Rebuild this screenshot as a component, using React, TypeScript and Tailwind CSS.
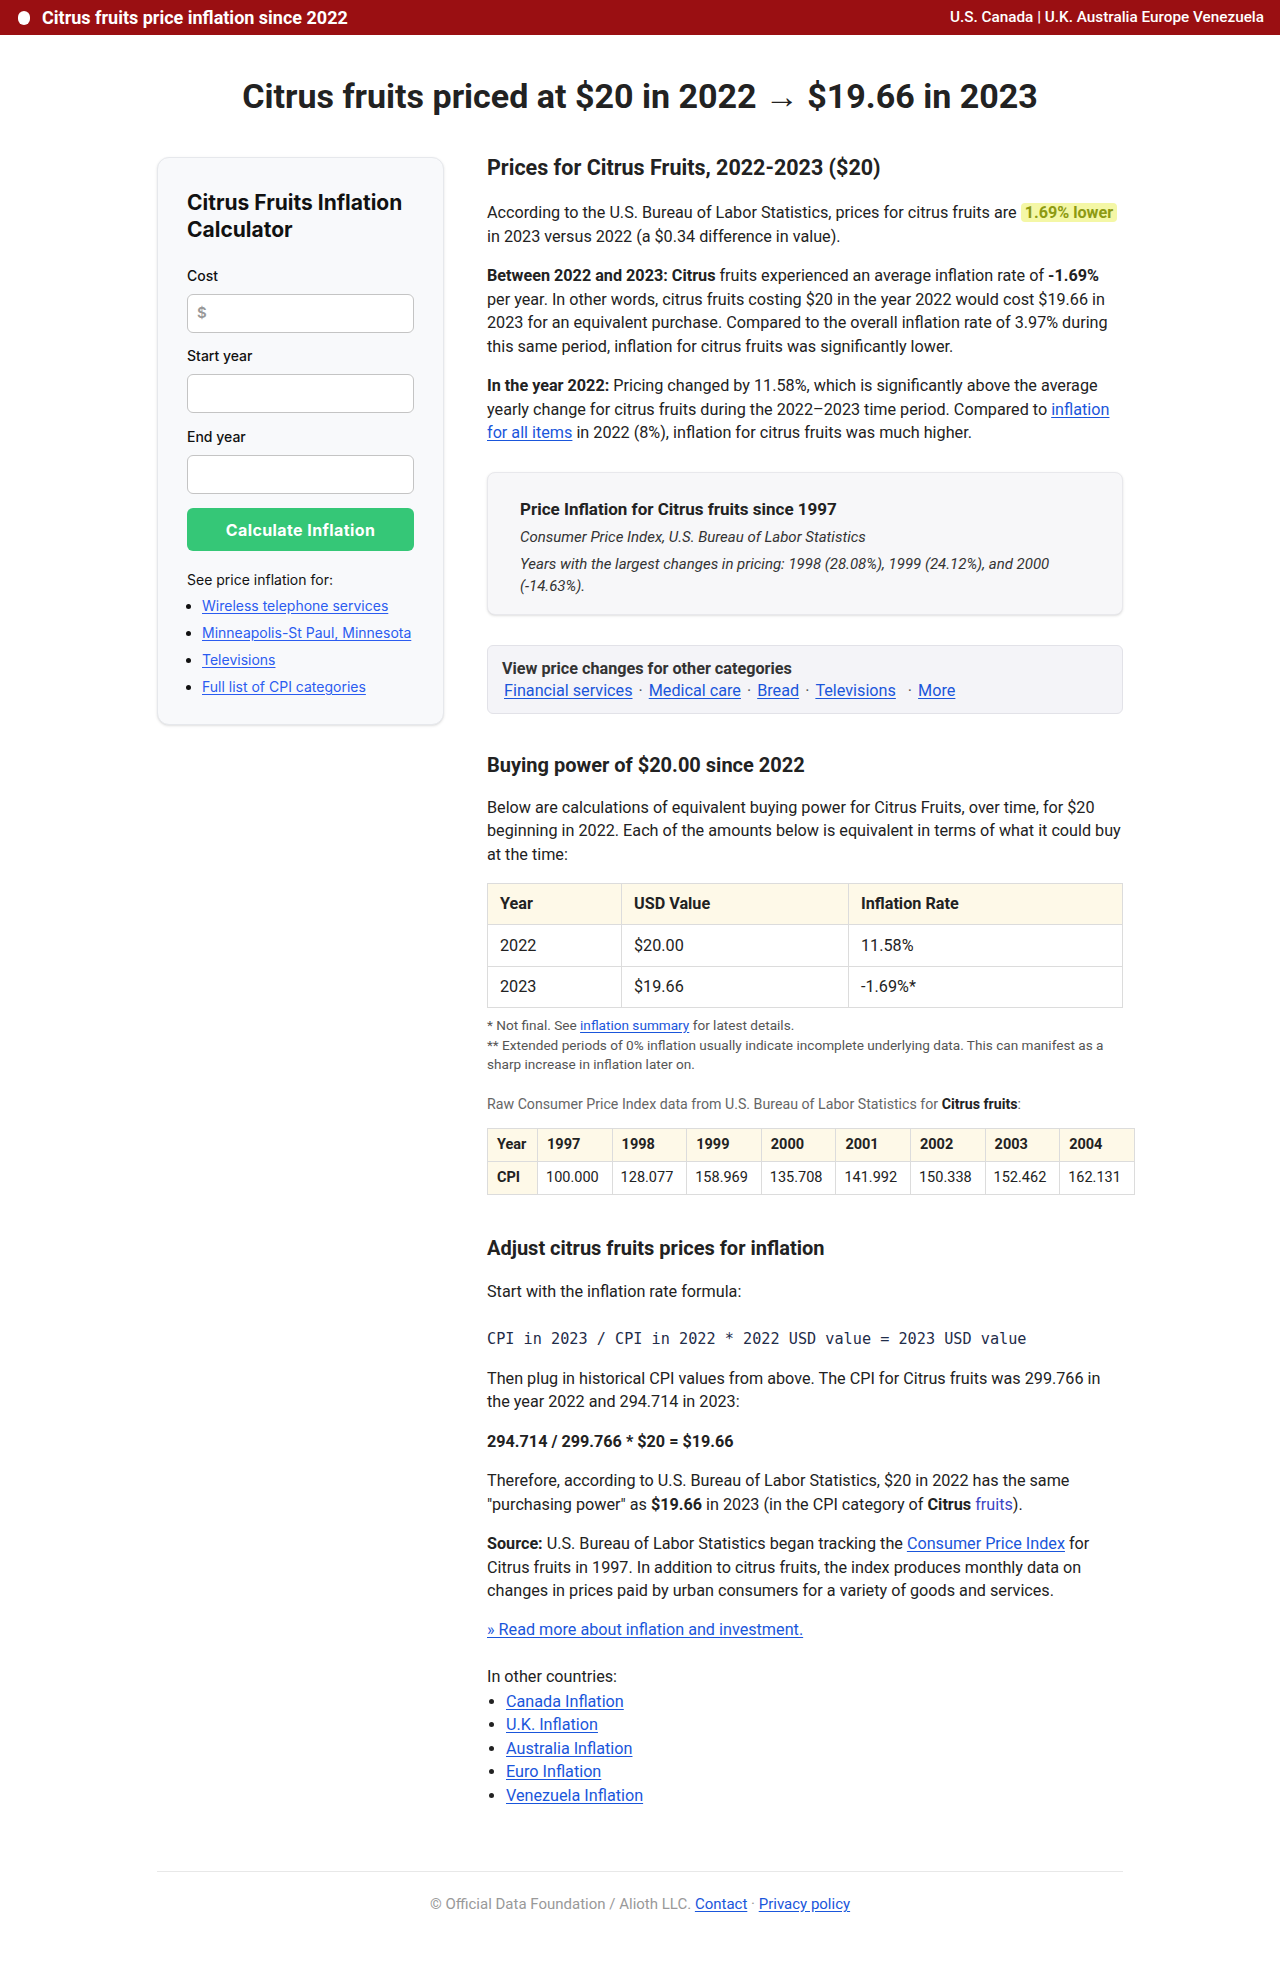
const sans = { fontFamily: "Roboto, 'Liberation Sans', sans-serif" };
const ui = { fontFamily: "Inter, 'Liberation Sans', sans-serif" };

const sideLinks = [
  "Wireless telephone services",
  "Minneapolis-St Paul, Minnesota",
  "Televisions",
  "Full list of CPI categories",
];

const cpi = [
  ["1997", "100.000"],
  ["1998", "128.077"],
  ["1999", "158.969"],
  ["2000", "135.708"],
  ["2001", "141.992"],
  ["2002", "150.338"],
  ["2003", "152.462"],
  ["2004", "162.131"],
];

const countries = [
  "Canada Inflation",
  "U.K. Inflation",
  "Australia Inflation",
  "Euro Inflation",
  "Venezuela Inflation",
];

const link = "text-[#1a56db] underline underline-offset-2";

function Sidebar() {
  return (
    <aside
      style={ui}
      className="w-[287px] shrink-0 mt-[3px] bg-[#f8f9fb] border border-[#e6e8ec] rounded-xl shadow-sm px-[29px] pt-[31px] pb-[27px] text-[#111]"
    >
      <h2 className="text-[21px] leading-[27px] font-bold">Citrus Fruits Inflation Calculator</h2>
      <form className="mt-[23px] flex flex-col">
        <label className="text-[14px] leading-[20px] font-medium">Cost</label>
        <div className="mt-2 h-[39px] bg-white border border-[#c4c4c4] rounded-md flex items-center px-[9px] text-[15px] text-[#999] font-semibold">
          $
        </div>
        <label className="mt-[13px] text-[14px] leading-[20px] font-medium">Start year</label>
        <input className="mt-2 h-[39px] bg-white border border-[#c4c4c4] rounded-md" />
        <label className="mt-[14px] text-[14px] leading-[20px] font-medium">End year</label>
        <input className="mt-2 h-[39px] bg-white border border-[#c4c4c4] rounded-md" />
        <button
          type="button"
          className="mt-[14px] h-[43px] rounded-md bg-[#35c777] text-white font-bold text-[16px] tracking-wide"
        >
          Calculate Inflation
        </button>
      </form>
      <p className="mt-[19px] text-[14px] leading-[20px]">See price inflation for:</p>
      <ul className="mt-[6px] flex flex-col gap-[7px] list-disc pl-[15px] text-[14px] leading-[20px]">
        {sideLinks.map((l) => (
          <li key={l} className="whitespace-nowrap">
            <a href="#" className="text-[#2b5cf0] underline underline-offset-2">
              {l}
            </a>
          </li>
        ))}
      </ul>
    </aside>
  );
}

function Main() {
  return (
    <main className="flex-1 min-w-0 text-[16.2px] leading-[23.5px] text-[#222]">
      <h2 className="text-[21.5px] leading-[28px] font-bold">Prices for Citrus Fruits, 2022-2023 ($20)</h2>
      <p className="mt-[19px]">
        According to the U.S. Bureau of Labor Statistics, prices for citrus fruits are{" "}
        <span className="bg-[#f4f7a6] text-[#8d9a12] font-bold px-1 rounded-sm">1.69% lower</span> in 2023 versus
        2022 (a $0.34 difference in value).
      </p>
      <p className="mt-4">
        <b>Between 2022 and 2023:</b> <b>Citrus</b> fruits experienced an average inflation rate of <b>-1.69%</b>{" "}
        per year. In other words, citrus fruits costing $20 in the year 2022 would cost $19.66 in 2023 for an
        equivalent purchase. Compared to the overall inflation rate of 3.97% during this same period, inflation for
        citrus fruits was significantly lower.
      </p>
      <p className="mt-4">
        <b>In the year 2022:</b> Pricing changed by 11.58%, which is significantly above the average yearly change
        for citrus fruits during the 2022&ndash;2023 time period. Compared to{" "}
        <a href="#" className={link}>
          inflation for all items
        </a>{" "}
        in 2022 (8%), inflation for citrus fruits was much higher.
      </p>

      <div className="mt-[27px] bg-[#f7f7f9] border border-[#e8e8ec] rounded-lg shadow-sm px-8 pt-[24px] pb-[17px]">
        <h3 className="text-[17px] leading-[24px] font-bold">Price Inflation for Citrus fruits since 1997</h3>
        <p className="mt-[5px] text-[15px] leading-[22px] italic text-[#333]">
          Consumer Price Index, U.S. Bureau of Labor Statistics
        </p>
        <p className="mt-[5px] text-[15px] leading-[22px] italic text-[#333]">
          Years with the largest changes in pricing: 1998 (28.08%), 1999 (24.12%), and 2000 (-14.63%).
        </p>
      </div>

      <div className="mt-[30px] bg-[#f4f4f8] border border-[#e2e2e8] rounded-md px-[14px] pt-[12px] pb-[11px] leading-[22px]">
        <div className="font-bold text-[#333]">View price changes for other categories</div>
        <div className="text-[#555]">
          <a href="#" className={`${link} ml-[2px]`}>Financial services</a>
          <span className="mx-[6px]">·</span>
          <a href="#" className={link}>Medical care</a>
          <span className="mx-[6px]">·</span>
          <a href="#" className={link}>Bread</a>
          <span className="mx-[6px]">·</span>
          <a href="#" className={link}>Televisions</a>
          <span className="ml-[12px] mr-[6px]">·</span>
          <a href="#" className={link}>More</a>
        </div>
      </div>

      <h2 className="mt-[37px] text-[20px] leading-[28px] font-bold">Buying power of $20.00 since 2022</h2>
      <p className="mt-[17px]">
        Below are calculations of equivalent buying power for Citrus Fruits, over time, for $20 beginning in 2022.
        Each of the amounts below is equivalent in terms of what it could buy at the time:
      </p>
      <table className="mt-[17px] w-full table-fixed border-collapse border border-[#dcdcdc]">
        <colgroup>
          <col className="w-[134px]" />
          <col className="w-[227px]" />
          <col />
        </colgroup>
        <thead>
          <tr className="bg-[#fef9e8] h-[41px]">
            <th className="border border-[#dcdcdc] text-left font-bold px-3">Year</th>
            <th className="border border-[#dcdcdc] text-left font-bold px-3">USD Value</th>
            <th className="border border-[#dcdcdc] text-left font-bold px-3">Inflation Rate</th>
          </tr>
        </thead>
        <tbody>
          <tr className="h-[42px]">
            <td className="border border-[#dcdcdc] px-3">2022</td>
            <td className="border border-[#dcdcdc] px-3">$20.00</td>
            <td className="border border-[#dcdcdc] px-3">11.58%</td>
          </tr>
          <tr className="h-[41px]">
            <td className="border border-[#dcdcdc] px-3">2023</td>
            <td className="border border-[#dcdcdc] px-3">$19.66</td>
            <td className="border border-[#dcdcdc] px-3">-1.69%*</td>
          </tr>
        </tbody>
      </table>
      <div className="mt-[8px] text-[13.6px] leading-[19.5px] text-[#555]">
        <p>
          * Not final. See{" "}
          <a href="#" className={link}>
            inflation summary
          </a>{" "}
          for latest details.
        </p>
        <p>
          ** Extended periods of 0% inflation usually indicate incomplete underlying data. This can manifest as a
          sharp increase in inflation later on.
        </p>
      </div>

      <p className="mt-[18px] text-[14.2px] leading-[22px] text-[#666]">
        Raw Consumer Price Index data from U.S. Bureau of Labor Statistics for <b className="text-[#222]">Citrus fruits</b>:
      </p>
      <table className="mt-[13px] w-[647px] max-w-none table-fixed border-collapse border border-[#dcdcdc] text-[14.5px]">
        <colgroup>
          <col className="w-[50px]" />
          {cpi.map(([y]) => (
            <col key={y} className="w-[74.6px]" />
          ))}
        </colgroup>
        <tbody>
          <tr className="bg-[#fef9e8] h-[33px]">
            <th className="border border-[#dcdcdc] text-left font-bold px-[9px]">Year</th>
            {cpi.map(([y]) => (
              <th key={y} className="border border-[#dcdcdc] text-left font-bold px-[9px]">
                {y}
              </th>
            ))}
          </tr>
          <tr className="h-[33px]">
            <th className="bg-[#fef9e8] border border-[#dcdcdc] text-left font-bold px-[9px]">CPI</th>
            {cpi.map(([y, v]) => (
              <td key={y} className="border border-[#dcdcdc] text-left px-[8px]">
                {v}
              </td>
            ))}
          </tr>
        </tbody>
      </table>

      <h2 className="mt-[39px] text-[20px] leading-[28px] font-bold">Adjust citrus fruits prices for inflation</h2>
      <p className="mt-[18px]">Start with the inflation rate formula:</p>
      <p
        className="mt-[25px] text-[15.2px] text-[#1f2d4a]"
        style={{ fontFamily: "'DejaVu Sans Mono', 'Liberation Mono', monospace" }}
      >
        CPI in 2023 / CPI in 2022 * 2022 USD value = 2023 USD value
      </p>
      <p className="mt-[15px]">
        Then plug in historical CPI values from above. The CPI for Citrus fruits was 299.766 in the year 2022 and
        294.714 in 2023:
      </p>
      <p className="mt-4 font-bold">294.714 / 299.766 * $20 = $19.66</p>
      <p className="mt-4">
        Therefore, according to U.S. Bureau of Labor Statistics, $20 in 2022 has the same "purchasing power" as{" "}
        <b>$19.66</b> in 2023 (in the CPI category of <b>Citrus</b> <span className="text-[#3b45c4]">fruits</span>).
      </p>
      <p className="mt-4">
        <b>Source:</b> U.S. Bureau of Labor Statistics began tracking the{" "}
        <a href="#" className={link}>
          Consumer Price Index
        </a>{" "}
        for Citrus fruits in 1997. In addition to citrus fruits, the index produces monthly data on changes in prices
        paid by urban consumers for a variety of goods and services.
      </p>
      <p className="mt-[15px]">
        <a href="#" className={link}>
          » Read more about inflation and investment.
        </a>
      </p>
      <p className="mt-[24px]">In other countries:</p>
      <ul className="mt-[1px] list-disc pl-[19px]">
        {countries.map((c) => (
          <li key={c}>
            <a href="#" className={link}>
              {c}
            </a>
          </li>
        ))}
      </ul>
    </main>
  );
}

export default function App() {
  return (
    <div style={sans} className="min-h-[1972px] bg-white text-[#222]">
      <header className="h-[35px] bg-[#9a0f12] text-white flex items-center justify-between pl-[18px] pr-4">
        <div className="flex items-center gap-[12px] text-[18px] font-bold">
          <span className="w-[12px] h-[14px] rounded-full bg-white" />
          Citrus fruits price inflation since 2022
        </div>
        <nav className="text-[15.3px] font-medium">U.S. Canada | U.K. Australia Europe Venezuela</nav>
      </header>

      <h1 className="mt-[41px] text-center text-[34px] leading-[40px] font-bold text-[#222]">
        Citrus fruits priced at $20 in 2022 → $19.66 in 2023
      </h1>

      <div className="mt-[38px] max-w-[966px] mx-auto flex items-start gap-[43px]">
        <Sidebar />
        <Main />
      </div>

      <footer className="mt-[64px] max-w-[966px] mx-auto border-t border-[#e8e8e8] pt-[21px] text-center text-[15px] text-[#999]">
        © Official Data Foundation / Alioth LLC.{" "}
        <a href="#" className={link}>
          Contact
        </a>{" "}
        ·{" "}
        <a href="#" className={link}>
          Privacy policy
        </a>
      </footer>
    </div>
  );
}
